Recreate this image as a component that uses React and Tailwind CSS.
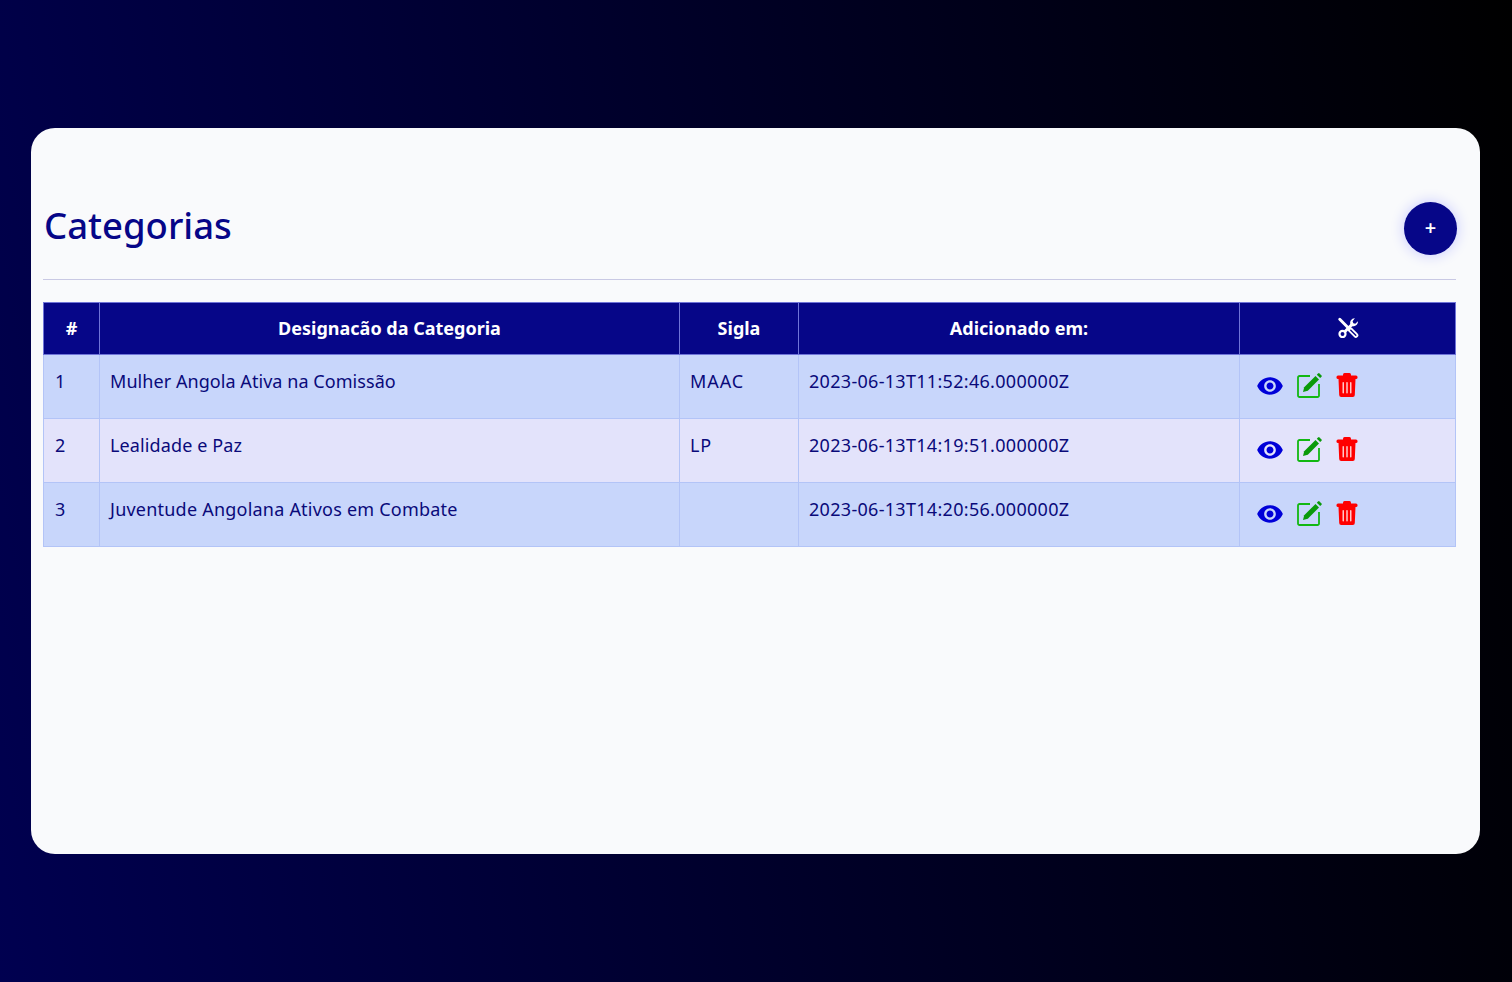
import { MdRemoveRedEye } from "react-icons/md";

const rows = [
  { id: 1, name: "Mulher Angola Ativa na Comissão", sigla: "MAAC", date: "2023-06-13T11:52:46.000000Z", bg: "bg-[#c8d6fb]", track: "tracking-[0.06px]" },
  { id: 2, name: "Lealidade e Paz", sigla: "LP", date: "2023-06-13T14:19:51.000000Z", bg: "bg-[#e3e3fb]", track: "tracking-[0.12px]" },
  { id: 3, name: "Juventude Angolana Ativos em Combate", sigla: "", date: "2023-06-13T14:20:56.000000Z", bg: "bg-[#c8d6fb]", track: "tracking-[0.22px]" },
];

function ToolsIcon() {
  return (
    <svg width="22" height="22" viewBox="0 0 24 24" fill="none" className="mx-auto -translate-y-[1px]">
      <path d="M3 2.500L13 12.500" stroke="#fff" strokeWidth="3.200" strokeLinecap="round" />
      <path d="M14.500 14L20.500 20" stroke="#fff" strokeWidth="5.500" strokeLinecap="round" />
      <path d="M15 14.500L20.500 20" stroke="#060688" strokeWidth="1.500" strokeLinecap="round" />
      <path d="M17 7.500L8.500 16" stroke="#fff" strokeWidth="3.200" />
      <circle cx="6" cy="18.500" r="3.300" stroke="#fff" strokeWidth="2.400" />
      <path d="M22.800 4.500a5 5 0 0 1-6.800 5.200l-1.500-1.500a5 5 0 0 1 5-6.800L17 4.500l.8 2.200 2.200.6z" fill="#fff" />
    </svg>
  );
}

function EditIcon() {
  return (
    <svg width="26" height="26" viewBox="0 0 26 26" fill="none">
      <path d="M14 4H3.500A1.500 1.500 0 0 0 2 5.500V23.500A1.500 1.500 0 0 0 3.500 25H21.500A1.500 1.500 0 0 0 23 23.500V12" stroke="#12b812" strokeWidth="1.800" />
      <path d="M7 20l1.200-4.800L19.500 4l3.500 3.500L11.800 18.800z" fill="#0a9a0a" />
      <path d="M20.800 2.700l1.300-1.300a1 1 0 0 1 1.400 0l2 2a1 1 0 0 1 0 1.400l-1.300 1.300z" fill="#0a9a0a" />
    </svg>
  );
}

function TrashIcon() {
  return (
    <svg width="22" height="24" viewBox="0 0 22 24" fill="none">
      <rect x="7" y="0" width="8" height="4" rx="1.500" fill="#ff0000" />
      <rect x="0.500" y="2.500" width="21" height="3.500" rx="1.500" fill="#ff0000" />
      <path d="M2.500 6H19.500L18.800 22a2 2 0 0 1-2 2H5.200a2 2 0 0 1-2-2z" fill="#ff0000" />
      <rect x="6.500" y="9" width="1.500" height="11.500" rx="0.700" fill="#ffc8c8" />
      <rect x="10.250" y="9" width="1.500" height="11.500" rx="0.700" fill="#ffc8c8" />
      <rect x="14" y="9" width="1.500" height="11.500" rx="0.700" fill="#ffc8c8" />
    </svg>
  );
}

export default function App() {
  return (
    <div className="h-[982px] bg-[linear-gradient(80deg,#000050,#000000)] pl-[31px] pr-[32px] pt-[128px] font-['Noto_Sans',sans-serif]">
      <div className="h-[726px] rounded-[24px] bg-[#f9fafc] pl-[12px] pr-[24px] pt-[75px]">
        <div className="flex items-center justify-between h-[52px]">
          <h1 className="text-[36.500px] font-medium text-[#060688] pl-[1px] pb-[8px]">Categorias</h1>
          <button className="w-[53px] h-[53px] -translate-y-[1px] translate-x-[1px] rounded-full bg-[#060688] text-white text-[20px] font-semibold flex items-center justify-center shadow-[0_0_14px_#c5c8ff]">+</button>
        </div>
        <hr className="mt-[24px] border-[#c9c9e4]" />
        <table className="mt-[22px] w-full table-fixed border-collapse text-[18px] text-[#0a0a7a]">
          <thead>
            <tr className="bg-[#060688] text-white h-[52px] font-bold">
              <th className="w-[56px] border border-[#6f74d8]">#</th>
              <th className="w-[580px] border border-[#6f74d8]">Designacão da Categoria</th>
              <th className="w-[119px] border border-[#6f74d8]">Sigla</th>
              <th className="w-[441px] border border-[#6f74d8]">Adicionado em:</th>
              <th className="border border-[#6f74d8]">
                <ToolsIcon />
              </th>
            </tr>
          </thead>
          <tbody>
            {rows.map((row) => (
              <tr key={row.id} className={`${row.bg} h-[64px]`}>
                <td className="border border-[#b3c4f7] pl-[11px] pr-[10px] pt-[13px] align-top">{row.id}</td>
                <td className={`border border-[#b3c4f7] pl-[10px] pr-[10px] pt-[13px] align-top ${row.track}`}>{row.name}</td>
                <td className="border border-[#b3c4f7] pl-[10px] pr-[10px] pt-[13px] align-top tracking-[0.9px]">{row.sigla}</td>
                <td className="border border-[#b3c4f7] pl-[10px] pr-[10px] pt-[13px] align-top tracking-[0.3px]">{row.date}</td>
                <td className="border border-[#b3c4f7] pl-[17px] pt-[15px] align-top">
                  <div className="flex items-center">
                    <MdRemoveRedEye className="text-[28px] text-[#0000d8] -ml-[1px] mt-[2px]" />
                    <span className="ml-[12px]"><EditIcon /></span>
                    <span className="ml-[14px]"><TrashIcon /></span>
                  </div>
                </td>
              </tr>
            ))}
          </tbody>
        </table>
      </div>
    </div>
  );
}
